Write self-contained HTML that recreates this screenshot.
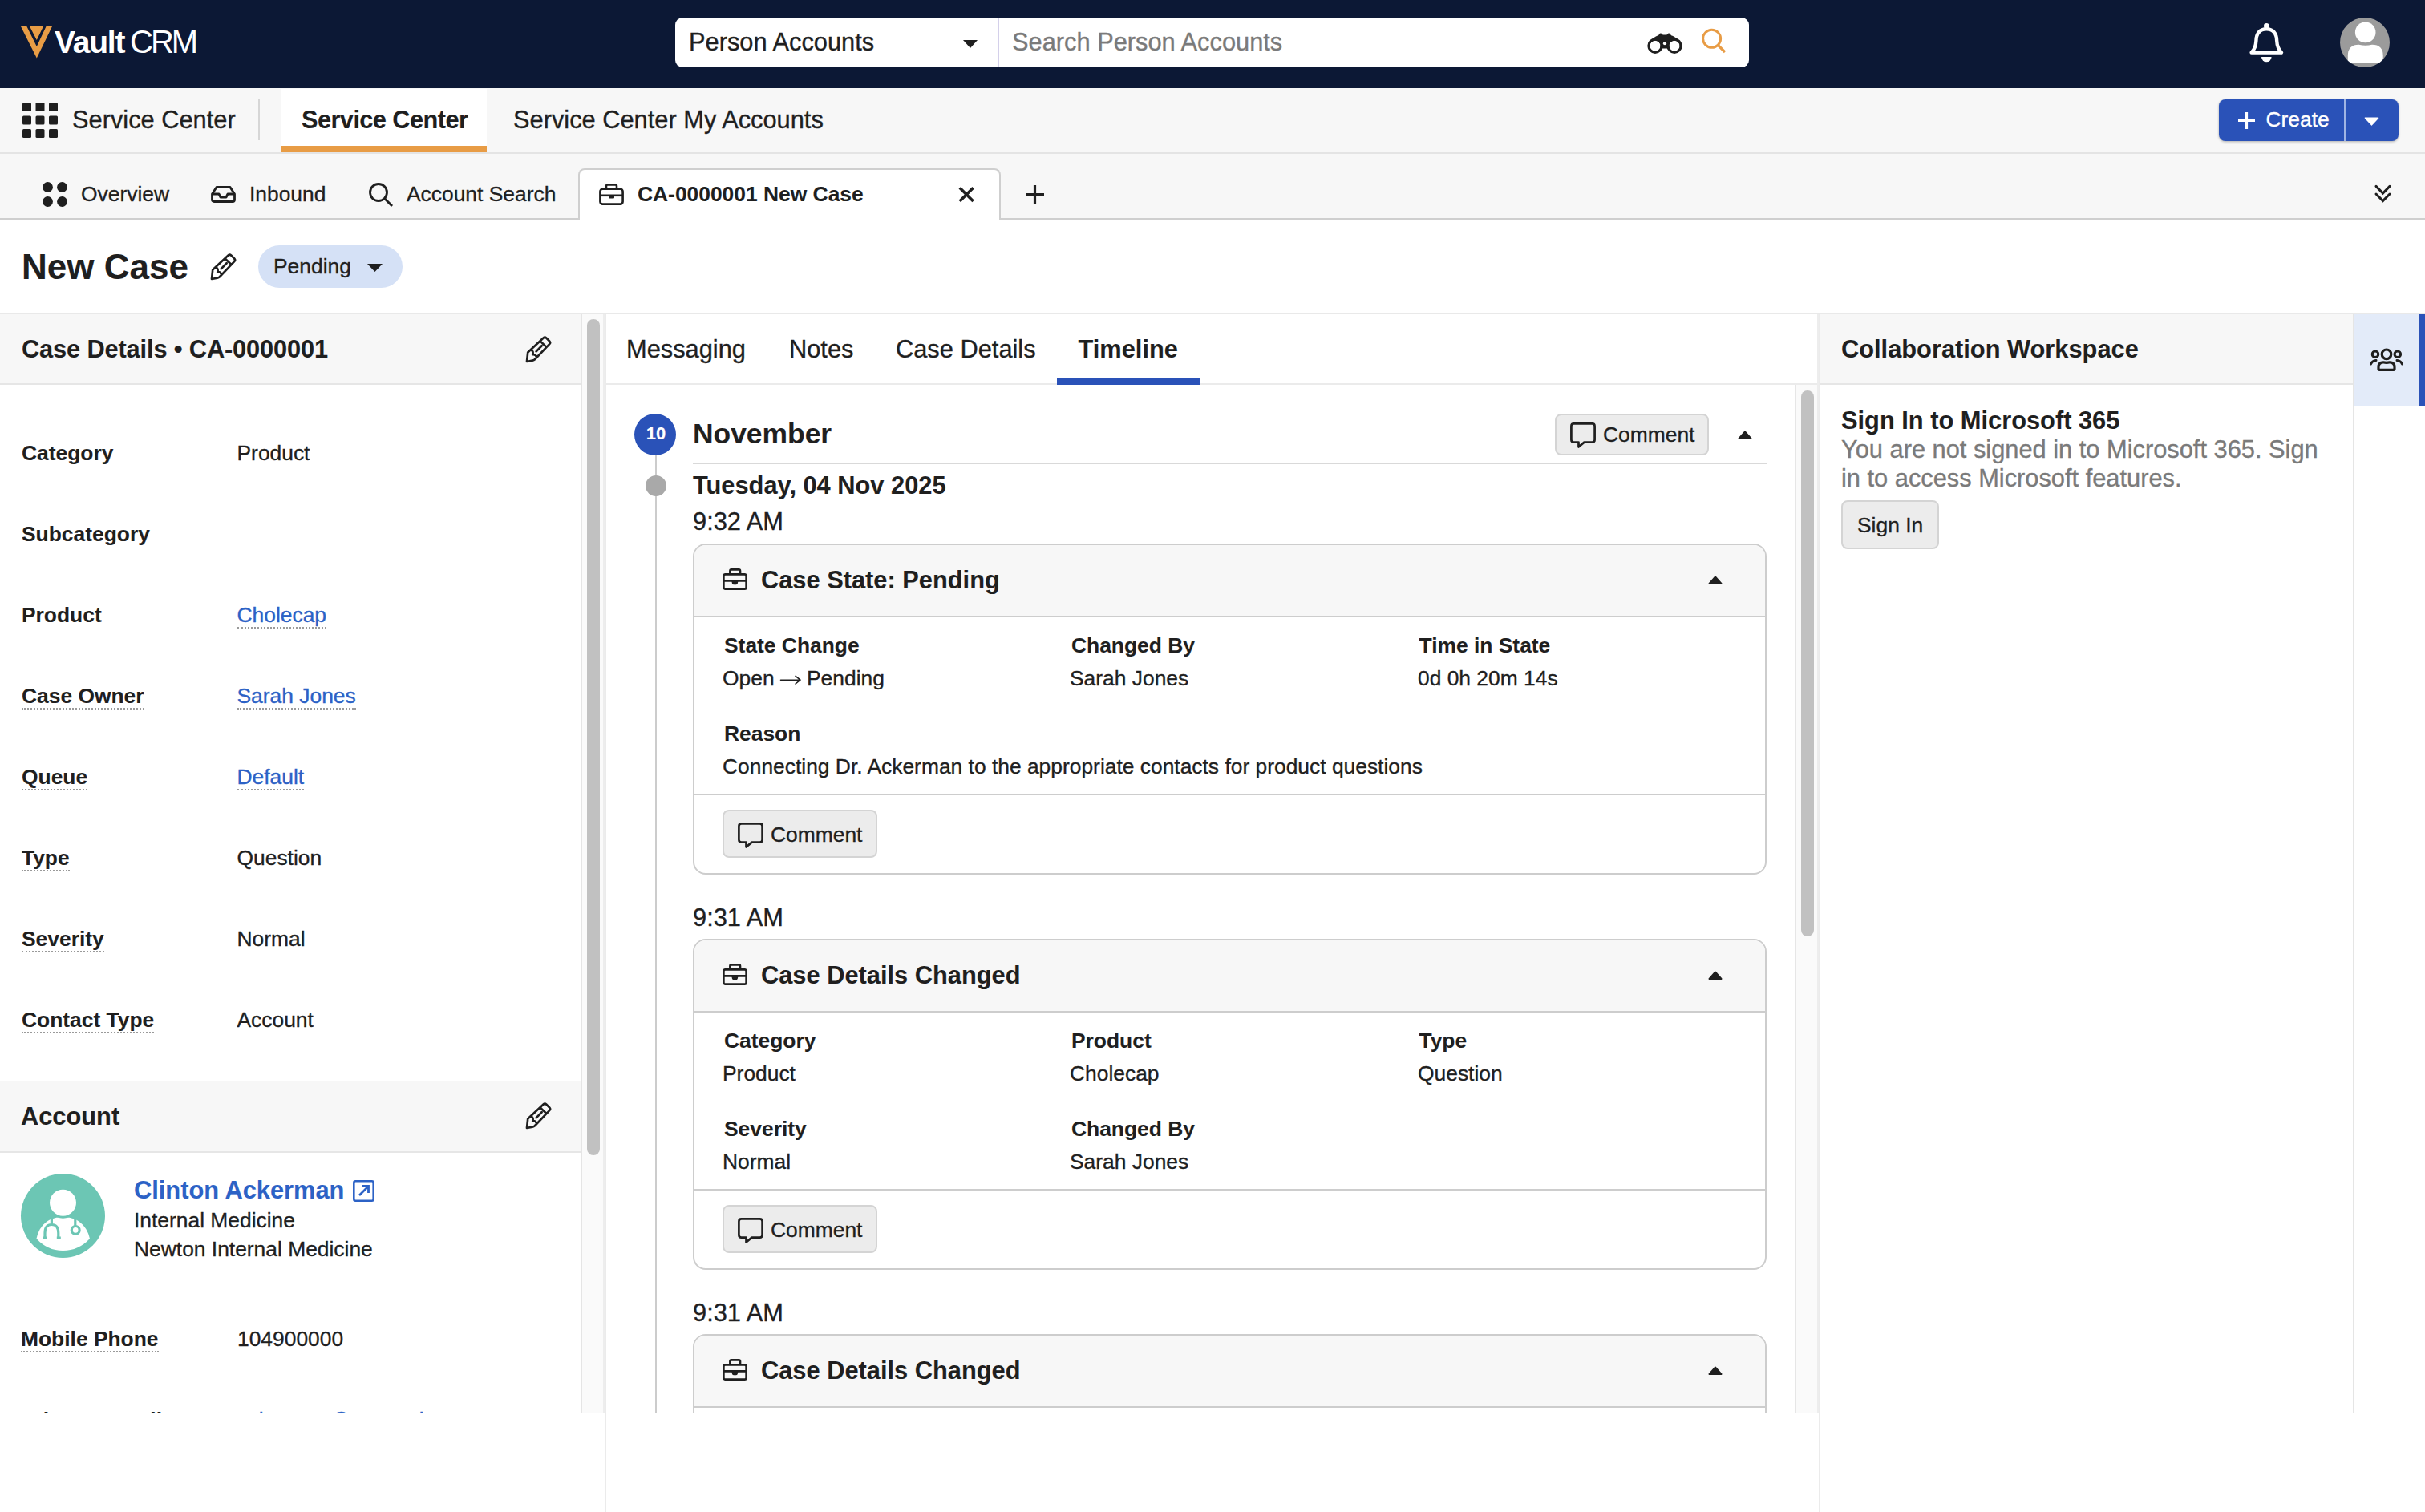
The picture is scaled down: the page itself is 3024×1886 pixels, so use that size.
<!DOCTYPE html>
<html><head><meta charset="utf-8">
<style>
*{box-sizing:border-box}
html,body{margin:0;padding:0}
body{width:3024px;height:1886px;position:relative;overflow:hidden;background:#fff;font-family:"Liberation Sans",sans-serif;color:#1f1f1f}
.a{position:absolute}
.t{position:absolute;white-space:nowrap;line-height:1;-webkit-text-stroke:0.35px currentColor}
.b{font-weight:bold;-webkit-text-stroke:0.1px currentColor}
.f26{font-size:26.4px}.f30{font-size:30.8px}.f32{font-size:32px}
.lnk{color:#2c62c6}
.dot{border-bottom:2px dotted #9a9a9a;padding-bottom:2px}
svg{position:absolute;overflow:visible}
@media (max-width:2000px){html{zoom:0.5}}
</style></head><body>
<svg width="0" height="0" style="position:absolute"><defs>
 <g id="pen"><path d="M2.2 19.6 L21.6 1.6 Q23.4 -0.1 25.2 1.6 L29.2 5.5 Q31 7.3 29.2 9.1 L10.9 28.2 Q9.8 29.2 8 29.6 L1 31 Z M17.6 5.4 L25.2 12.7 M12.6 18.4 L19.6 11.2 M6.6 16.6 Q9.6 18.4 8.2 22.2 Q11.8 21.6 13.2 25.2" fill="none" stroke="#1f1f1f" stroke-width="2.7" stroke-linejoin="round" stroke-linecap="round"/></g>

 <g id="brief"><path d="M9.4 7 V3.2 Q9.4 1.4 11.2 1.4 H20.2 Q22 1.4 22 3.2 V7" fill="none" stroke="#1f1f1f" stroke-width="2.7"/>
 <rect x="1.35" y="7.4" width="28.3" height="18.3" rx="2.2" fill="none" stroke="#1f1f1f" stroke-width="2.7"/>
 <line x1="1.4" y1="15.4" x2="29.6" y2="15.4" stroke="#1f1f1f" stroke-width="2.6"/>
 <path d="M11.2 15 H19.6 L18.9 18.6 Q18.6 20.2 17 20.2 H13.8 Q12.2 20.2 11.9 18.6 Z" fill="#1f1f1f"/></g>
 <g id="cmt"><path d="M4.5 1.4 H27.5 Q30.6 1.4 30.6 4.5 V21.5 Q30.6 24.6 27.5 24.6 H17.5 L10.5 30.5 V24.6 H4.5 Q1.4 24.6 1.4 21.5 V4.5 Q1.4 1.4 4.5 1.4 Z" fill="none" stroke="#1f1f1f" stroke-width="2.7" stroke-linejoin="round"/></g>
</defs></svg>


<!-- HEADER -->
<div class="a" style="left:0;top:0;width:3024px;height:110px;background:#0c1835"></div>
<svg style="left:26px;top:33px" width="40" height="40" viewBox="0 0 40 40">
 <polygon points="0,0 39,0 19.8,39.5" fill="#e89c45"/>
 <polygon points="7.4,0 11,0 19.8,17 28,0 31.5,0 19.8,25" fill="#0c1835"/>
</svg>
<div class="t b" style="left:68px;top:33px;font-size:39px;color:#fff;letter-spacing:-1.2px;-webkit-text-stroke:0">Vault</div>
<div class="t" style="left:162px;top:32px;font-size:40px;color:#fff;letter-spacing:-3px;-webkit-text-stroke:0">CRM</div>

<div class="a" style="left:842px;top:22px;width:1339px;height:62px;background:#fff;border-radius:9px"></div>
<div class="t f30" style="left:859px;top:38px">Person Accounts</div>
<svg style="left:1201px;top:50px" width="18" height="10" viewBox="0 0 18 10"><polygon points="0,0 18,0 9,10" fill="#1f1f1f"/></svg>
<div class="a" style="left:1244px;top:22px;width:2px;height:62px;background:#d4d0ea"></div>
<div class="t f30" style="left:1262px;top:38px;color:#7a7a7a">Search Person Accounts</div>
<!-- binoculars -->
<svg style="left:2054px;top:41px" width="44" height="26" viewBox="0 0 44 26">
 <path d="M2.5 13 C5 7.5 10 4.5 14 3.2 L15.8 0.8 Q16.8 0 18 0.8 L19.6 2.4 L24.4 2.4 L26 0.8 Q27.2 0 28.2 0.8 L30 3.2 C34 4.5 39 7.5 41.5 13 L41.5 17 L26 19.5 L18 19.5 L2.5 17 Z" fill="#1f1f1f"/>
 <circle cx="10" cy="16.2" r="6.5" fill="#fff"/>
 <circle cx="34" cy="16.2" r="6.5" fill="#fff"/>
 <circle cx="10" cy="16.2" r="8.1" fill="none" stroke="#1f1f1f" stroke-width="3.2"/>
 <circle cx="34" cy="16.2" r="8.1" fill="none" stroke="#1f1f1f" stroke-width="3.2"/>
 <circle cx="22" cy="13.2" r="2.1" fill="#fff"/>
</svg>
<!-- magnifier -->
<svg style="left:2120px;top:34px" width="36" height="36" viewBox="0 0 36 36">
 <circle cx="14.6" cy="14.3" r="11" fill="none" stroke="#e89c45" stroke-width="3"/>
 <line x1="22.5" y1="22.5" x2="31" y2="31" stroke="#e89c45" stroke-width="3.2"/>
</svg>
<!-- bell -->
<svg style="left:2804px;top:27px" width="46" height="52" viewBox="0 0 46 52">
 <circle cx="22.3" cy="5.4" r="3.3" fill="#fff"/>
 <path d="M3.6 38.6 Q9 33 9.4 24 C9.6 14.5 14.5 9.2 22.3 9.2 C30.1 9.2 35 14.5 35.2 24 Q35.6 33 41 38.6 Z" fill="none" stroke="#fff" stroke-width="4.4" stroke-linejoin="round"/>
 <path d="M16 44 H28.6 A6.3 6.3 0 0 1 16 44 Z" fill="#fff"/>
</svg>
<!-- avatar -->
<svg style="left:2918px;top:22px" width="62" height="62" viewBox="0 0 62 62">
 <defs><clipPath id="avc"><circle cx="31" cy="31" r="31"/></clipPath></defs>
 <circle cx="31" cy="31" r="31" fill="#9b9b9b"/>
 <circle cx="31.7" cy="18.4" r="12.8" fill="#fff"/>
 <path d="M9.8 56.2 V47.5 Q9.8 33.7 23.5 33.7 Q31.7 35.6 40 33.7 Q53.7 33.7 53.7 47.5 V56.2 Z" fill="#fff" clip-path="url(#avc)"/>
</svg>

<!-- APP NAV -->
<div class="a" style="left:0;top:110px;width:3024px;height:82px;background:#f7f7f7;border-bottom:2px solid #e4e4e4"></div>
<svg style="left:28px;top:128px" width="44" height="44" viewBox="0 0 44 44" fill="#1f1f1f">
 <rect x="0" y="0" width="11" height="11" rx="1.5"/><rect x="16.5" y="0" width="11" height="11" rx="1.5"/><rect x="33" y="0" width="11" height="11" rx="1.5"/>
 <rect x="0" y="16.5" width="11" height="11" rx="1.5"/><rect x="16.5" y="16.5" width="11" height="11" rx="1.5"/><rect x="33" y="16.5" width="11" height="11" rx="1.5"/>
 <rect x="0" y="33" width="11" height="11" rx="1.5"/><rect x="16.5" y="33" width="11" height="11" rx="1.5"/><rect x="33" y="33" width="11" height="11" rx="1.5"/>
</svg>
<div class="t f30" style="left:90px;top:135px">Service Center</div>
<div class="a" style="left:322px;top:124px;width:2px;height:51px;background:#d6d6d6"></div>
<div class="a" style="left:350px;top:111px;width:257px;height:79px;background:#fff;border-bottom:8px solid #e89c45"></div>
<div class="t f30 b" style="left:376px;top:135px;letter-spacing:-0.6px">Service Center</div>
<div class="t f30" style="left:640px;top:135px">Service Center My Accounts</div>
<!-- create -->
<div class="a" style="left:2767px;top:124px;width:224px;height:52px;background:#2a52b8;border-radius:8px;box-shadow:0 1px 3px rgba(0,0,0,.3)"></div>
<div class="a" style="left:2923px;top:124px;width:2px;height:52px;background:#9fb4e4"></div>
<svg style="left:2790px;top:139px" width="23" height="23" viewBox="0 0 23 23"><path d="M11.5 1 V22 M1 11.5 H22" stroke="#fff" stroke-width="3.2"/></svg>
<div class="t f26" style="left:2825.5px;top:136px;color:#fff">Create</div>
<svg style="left:2948px;top:146px" width="19" height="11" viewBox="0 0 19 11"><path d="M1.5 1.2 H17.5 L9.5 9.8 Z" fill="#fff" stroke="#fff" stroke-width="1.6" stroke-linejoin="round"/></svg>

<!-- TABS ROW -->
<div class="a" style="left:0;top:192px;width:3024px;height:82px;background:#f7f7f7;border-bottom:2px solid #cfcfcf"></div>
<svg style="left:53px;top:227px" width="31" height="31" viewBox="0 0 31 31" fill="#1f1f1f">
 <circle cx="6.5" cy="6.5" r="6.4"/><circle cx="24.5" cy="6.5" r="6.4"/><circle cx="6.5" cy="24.5" r="6.4"/><circle cx="24.5" cy="24.5" r="6.4"/>
</svg>
<div class="t f26" style="left:101px;top:229px">Overview</div>
<svg style="left:263px;top:232px" width="31" height="21" viewBox="0 0 31 21">
 <path d="M1.5 10 L7 1.5 H24 L29.5 10 V17 Q29.5 19.5 27 19.5 H4 Q1.5 19.5 1.5 17 Z M1.5 10 H10 L12 14 H19 L21 10 H29.5" fill="none" stroke="#1f1f1f" stroke-width="2.8" stroke-linejoin="round"/>
</svg>
<div class="t f26" style="left:311px;top:229px">Inbound</div>
<svg style="left:459px;top:227px" width="32" height="32" viewBox="0 0 32 32">
 <circle cx="13" cy="13" r="10.5" fill="none" stroke="#1f1f1f" stroke-width="2.8"/>
 <line x1="20.5" y1="20.5" x2="30" y2="30" stroke="#1f1f1f" stroke-width="3"/>
</svg>
<div class="t f26" style="left:507px;top:229px">Account Search</div>
<div class="a" style="left:721px;top:210px;width:527px;height:64px;background:#fff;border:2px solid #cfcfcf;border-bottom:none;border-radius:8px 8px 0 0"></div>
<svg style="left:747px;top:229px" width="31" height="27" viewBox="0 0 31 27">
 <path d="M9 6.5 V3 Q9 1.4 10.6 1.4 H20.4 Q22 1.4 22 3 V6.5" fill="none" stroke="#1f1f1f" stroke-width="2.6"/>
 <rect x="1.4" y="6.7" width="28.2" height="18.9" rx="3" fill="none" stroke="#1f1f1f" stroke-width="2.6"/>
 <line x1="1.4" y1="14.8" x2="29.6" y2="14.8" stroke="#1f1f1f" stroke-width="2.6"/>
 <rect x="12" y="14.5" width="7" height="4" rx="1" fill="#1f1f1f"/>
</svg>
<div class="t f26 b" style="left:795px;top:229px">CA-0000001 New Case</div>
<svg style="left:1195px;top:233px" width="20" height="19" viewBox="0 0 20 19"><path d="M1.8 1.2 L18.6 18 M18.6 1.2 L1.8 18" stroke="#1f1f1f" stroke-width="3.6"/></svg>
<svg style="left:1279px;top:231px" width="23" height="23" viewBox="0 0 23 23"><path d="M11.5 0 V23 M0 11.5 H23" stroke="#1f1f1f" stroke-width="3.2"/></svg>
<svg style="left:2961px;top:230px" width="21" height="23" viewBox="0 0 21 23"><path d="M2 2.4 L10.5 11 L19 2.4 M2 12 L10.5 20.6 L19 12" fill="none" stroke="#1f1f1f" stroke-width="3" stroke-linecap="round"/></svg>

<!-- PAGE TITLE -->
<div class="t b" style="left:27px;top:311px;font-size:44px">New Case</div>
<svg style="left:263px;top:317px" width="31" height="31" viewBox="0 0 31 31"><use href="#pen"/></svg>
<div class="a" style="left:322px;top:306px;width:180px;height:53px;background:#d5e1f6;border-radius:27px"></div>
<div class="t f26" style="left:341px;top:319px">Pending</div>
<svg style="left:458px;top:329px" width="19" height="10" viewBox="0 0 19 10"><polygon points="0,0 19,0 9.5,10" fill="#1f1f1f"/></svg>

<!-- PANELS top border -->
<div class="a" style="left:0;top:390px;width:3024px;height:2px;background:#e9e9e9"></div>


<!-- LEFT PANEL -->
<div class="a" style="left:0;top:392px;width:724px;height:1371px;overflow:hidden;background:#fff">
 <div class="a" style="left:0;top:0;width:724px;height:88px;background:#f7f7f7;border-bottom:2px solid #e6e6e6"></div>
 <div class="t f30 b" style="left:27px;top:29px;letter-spacing:-0.15px">Case Details &bull; CA-0000001</div>
 <svg style="left:656px;top:28px" width="31" height="31" viewBox="0 0 31 31"><use href="#pen"/></svg>
 <div class="t f26 b" style="left:27px;top:160px">Category</div><div class="t f26" style="left:295.5px;top:160px">Product</div>
 <div class="t f26 b" style="left:27px;top:261px">Subcategory</div>
 <div class="t f26 b" style="left:27px;top:362px">Product</div><div class="t f26 lnk dot" style="left:295.5px;top:362px">Cholecap</div>
 <div class="t f26 b dot" style="left:27px;top:463px">Case Owner</div><div class="t f26 lnk dot" style="left:295.5px;top:463px">Sarah Jones</div>
 <div class="t f26 b dot" style="left:27px;top:564px">Queue</div><div class="t f26 lnk dot" style="left:295.5px;top:564px">Default</div>
 <div class="t f26 b dot" style="left:27px;top:665px">Type</div><div class="t f26" style="left:295.5px;top:665px">Question</div>
 <div class="t f26 b dot" style="left:27px;top:766px">Severity</div><div class="t f26" style="left:295.5px;top:766px">Normal</div>
 <div class="t f26 b dot" style="left:27px;top:867px">Contact Type</div><div class="t f26" style="left:295.5px;top:867px">Account</div>
 <div class="a" style="left:0;top:957px;width:724px;height:89px;background:#f7f7f7;border-bottom:2px solid #e6e6e6"></div>
 <div class="t f30 b" style="left:26px;top:986px">Account</div>
 <svg style="left:656px;top:984px" width="31" height="31" viewBox="0 0 31 31"><use href="#pen"/></svg>
 <div class="a" style="left:26px;top:1072px;width:105px;height:105px;border-radius:50%;background:#6cc6b4"></div>
 <svg style="left:26px;top:1072px" width="105" height="105" viewBox="0 0 105 105">
  <path d="M36.9 57 Q44 54 52.5 54 Q61 54 68.2 57 Q82 64 86 81 Q72 96 52.5 96 Q33 96 19.5 81 Q23 64 36.9 57 Z" fill="#fff"/>
  <circle cx="52.5" cy="36.2" r="19.6" fill="#6cc6b4"/>
  <circle cx="52.5" cy="36.2" r="16.5" fill="#fff"/>
  <path d="M38.4 54 V63.5 M30 80 V74 Q30 63.5 38.4 63.5 Q46.8 63.5 46.8 74 V80 M27 80 H32 M44.8 80 H49.8" fill="none" stroke="#6cc6b4" stroke-width="3.2"/>
  <path d="M67.8 55 V65.5" stroke="#6cc6b4" stroke-width="3.2"/>
  <circle cx="68.2" cy="70.4" r="4.9" fill="none" stroke="#6cc6b4" stroke-width="3.2"/>
 </svg>
 <div class="t f30 b lnk" style="left:167px;top:1078px">Clinton Ackerman</div>
 <svg style="left:440px;top:1080px" width="27" height="27" viewBox="0 0 27 27">
  <rect x="1.3" y="1.3" width="24.4" height="24.4" rx="2" fill="none" stroke="#2c62c6" stroke-width="2.6"/>
  <path d="M8 19 L19 8 M11 7.5 H19.5 V16" fill="none" stroke="#2c62c6" stroke-width="2.8"/>
 </svg>
 <div class="t f26" style="left:167px;top:1117px">Internal Medicine</div>
 <div class="t f26" style="left:167px;top:1153px">Newton Internal Medicine</div>
 <div class="t f26 b dot" style="left:26px;top:1265px">Mobile Phone</div><div class="t f26" style="left:296px;top:1265px">104900000</div>
 <div class="t f26 b" style="left:26px;top:1366px">Primary Email</div><div class="t f26 lnk" style="left:295px;top:1366px">ackerman@newtonim.com</div>
</div>
<div class="a" style="left:724px;top:392px;width:28px;height:1371px;background:#fafafa;border-left:2px solid #e5e5e5"></div>
<div class="a" style="left:732px;top:398px;width:16px;height:1043px;background:#c1c1c1;border-radius:8px"></div>
<div class="a" style="left:752px;top:392px;width:2px;height:1371px;background:#ededed"></div>
<div class="a" style="left:754px;top:392px;width:2px;height:1494px;background:#ebebeb"></div>


<!-- MIDDLE PANEL -->
<div class="a" style="left:756px;top:392px;width:1510px;height:1371px;overflow:hidden;background:#fff">
 <div class="a" style="left:0;top:86px;width:1510px;height:2px;background:#ebebeb"></div>
 <div class="t f30" style="left:25px;top:29px">Messaging</div>
 <div class="t f30" style="left:228px;top:29px">Notes</div>
 <div class="t f30" style="left:361px;top:29px">Case Details</div>
 <div class="t f30 b" style="left:588.5px;top:29px">Timeline</div>
 <div class="a" style="left:562px;top:80px;width:178px;height:8px;background:#2a52b8"></div>
</div>
<div class="a" style="left:756px;top:480px;width:1482px;height:1283px;overflow:hidden;background:#fff">
 <div class="a" style="left:61px;top:76px;width:2px;height:1300px;background:#cccccc"></div>
 <div class="a" style="left:35px;top:36px;width:52px;height:52px;border-radius:50%;background:#2a52b8"></div>
 <div class="t b" style="left:36px;top:50px;width:52px;text-align:center;font-size:22px;color:#fff">10</div>
 <div class="t b" style="left:108px;top:44px;font-size:35.4px">November</div>
 <div class="a" style="left:108px;top:97px;width:1339px;height:2px;background:#d9d9d9"></div>
 <div class="a" style="left:1183px;top:36px;width:192px;height:52px;background:#ececec;border:2px solid #d4d4d4;border-radius:8px"></div>
 <svg style="left:1202px;top:47px" width="32" height="32" viewBox="0 0 32 32"><use href="#cmt"/></svg>
 <div class="t f26" style="left:1243px;top:49px">Comment</div>
 <svg style="left:1411px;top:57px" width="18" height="11" viewBox="0 0 18 11"><path d="M1.5 10 L9 1.5 L16.5 10 Z" fill="#1f1f1f" stroke="#1f1f1f" stroke-width="2" stroke-linejoin="round"/></svg>
 <div class="a" style="left:49px;top:113px;width:26px;height:26px;border-radius:50%;background:#a9a9a9"></div>
 <div class="t f30 b" style="left:108px;top:111px">Tuesday, 04 Nov 2025</div>
 <div class="t f30" style="left:108px;top:156px">9:32 AM</div>
 <div style="position:absolute;left:0;top:-480px">
 
 <div class="a" style="left:108px;top:678px;width:1339px;height:413px;border:2px solid #cdcdcd;border-radius:16px;background:#fff;overflow:hidden">
  <div class="a" style="left:0;top:0;width:1335px;height:90px;background:#f7f7f7;border-bottom:2px solid #cdcdcd"></div>
  <svg style="left:35px;top:29px" width="31" height="27" viewBox="0 0 31 27"><use href="#brief"/></svg>
  <div class="t f30 b" style="left:83px;top:29px">Case State: Pending</div>
  <svg style="left:1264px;top:38px" width="18" height="11" viewBox="0 0 18 11"><path d="M1.5 10 L9 1.5 L16.5 10 Z" fill="#1f1f1f" stroke="#1f1f1f" stroke-width="2" stroke-linejoin="round"/></svg>
  <div class="t f26 b" style="left:37px;top:112px">State Change</div><div class="t f26" style="left:35px;top:153px">Open</div><svg style="left:106px;top:162px" width="28" height="12" viewBox="0 0 28 12"><path d="M1.5 6.2 H25.5 M20 1.4 L26 6.2 L20 11" fill="none" stroke="#1f1f1f" stroke-width="1.6" stroke-linecap="round" stroke-linejoin="round"/></svg><div class="t f26" style="left:140px;top:153px">Pending</div><div class="t f26 b" style="left:470px;top:112px">Changed By</div><div class="t f26" style="left:468px;top:153px">Sarah Jones</div><div class="t f26 b" style="left:903.5px;top:112px">Time in State</div><div class="t f26" style="left:902px;top:153px">0d 0h 20m 14s</div><div class="t f26 b" style="left:37px;top:222px">Reason</div><div class="t f26" style="left:35px;top:263px">Connecting Dr. Ackerman to the appropriate contacts for product questions</div>
  <div class="a" style="left:0;top:310px;width:1335px;height:2px;background:#cdcdcd"></div>
  <div class="a" style="left:35px;top:330px;width:193px;height:60px;background:#ececec;border:2px solid #d4d4d4;border-radius:8px"></div>
  <svg style="left:54px;top:346px" width="32" height="32" viewBox="0 0 32 32"><use href="#cmt"/></svg>
  <div class="t f26" style="left:95px;top:348px">Comment</div>
 </div>
 </div>
 <div class="t f30" style="left:108px;top:650px">9:31 AM</div>
 <div style="position:absolute;left:0;top:-480px">
 
 <div class="a" style="left:108px;top:1171px;width:1339px;height:413px;border:2px solid #cdcdcd;border-radius:16px;background:#fff;overflow:hidden">
  <div class="a" style="left:0;top:0;width:1335px;height:90px;background:#f7f7f7;border-bottom:2px solid #cdcdcd"></div>
  <svg style="left:35px;top:29px" width="31" height="27" viewBox="0 0 31 27"><use href="#brief"/></svg>
  <div class="t f30 b" style="left:83px;top:29px">Case Details Changed</div>
  <svg style="left:1264px;top:38px" width="18" height="11" viewBox="0 0 18 11"><path d="M1.5 10 L9 1.5 L16.5 10 Z" fill="#1f1f1f" stroke="#1f1f1f" stroke-width="2" stroke-linejoin="round"/></svg>
  <div class="t f26 b" style="left:37px;top:112px">Category</div><div class="t f26" style="left:35px;top:153px">Product</div><div class="t f26 b" style="left:470px;top:112px">Product</div><div class="t f26" style="left:468px;top:153px">Cholecap</div><div class="t f26 b" style="left:903.5px;top:112px">Type</div><div class="t f26" style="left:902px;top:153px">Question</div><div class="t f26 b" style="left:37px;top:222px">Severity</div><div class="t f26" style="left:35px;top:263px">Normal</div><div class="t f26 b" style="left:470px;top:222px">Changed By</div><div class="t f26" style="left:468px;top:263px">Sarah Jones</div>
  <div class="a" style="left:0;top:310px;width:1335px;height:2px;background:#cdcdcd"></div>
  <div class="a" style="left:35px;top:330px;width:193px;height:60px;background:#ececec;border:2px solid #d4d4d4;border-radius:8px"></div>
  <svg style="left:54px;top:346px" width="32" height="32" viewBox="0 0 32 32"><use href="#cmt"/></svg>
  <div class="t f26" style="left:95px;top:348px">Comment</div>
 </div>
 </div>
 <div class="t f30" style="left:108px;top:1143px">9:31 AM</div>
 <div style="position:absolute;left:0;top:-480px">
 
 <div class="a" style="left:108px;top:1664px;width:1339px;height:413px;border:2px solid #cdcdcd;border-radius:16px;background:#fff;overflow:hidden">
  <div class="a" style="left:0;top:0;width:1335px;height:90px;background:#f7f7f7;border-bottom:2px solid #cdcdcd"></div>
  <svg style="left:35px;top:29px" width="31" height="27" viewBox="0 0 31 27"><use href="#brief"/></svg>
  <div class="t f30 b" style="left:83px;top:29px">Case Details Changed</div>
  <svg style="left:1264px;top:38px" width="18" height="11" viewBox="0 0 18 11"><path d="M1.5 10 L9 1.5 L16.5 10 Z" fill="#1f1f1f" stroke="#1f1f1f" stroke-width="2" stroke-linejoin="round"/></svg>
  <div class="t f26 b" style="left:37px;top:112px">Category</div><div class="t f26" style="left:35px;top:153px">Product</div><div class="t f26 b" style="left:470px;top:112px">Product</div><div class="t f26" style="left:468px;top:153px">Cholecap</div><div class="t f26 b" style="left:903.5px;top:112px">Type</div><div class="t f26" style="left:902px;top:153px">Question</div><div class="t f26 b" style="left:37px;top:222px">Severity</div><div class="t f26" style="left:35px;top:263px">Normal</div><div class="t f26 b" style="left:470px;top:222px">Changed By</div><div class="t f26" style="left:468px;top:263px">Sarah Jones</div>
  <div class="a" style="left:0;top:310px;width:1335px;height:2px;background:#cdcdcd"></div>
  <div class="a" style="left:35px;top:330px;width:193px;height:60px;background:#ececec;border:2px solid #d4d4d4;border-radius:8px"></div>
  <svg style="left:54px;top:346px" width="32" height="32" viewBox="0 0 32 32"><use href="#cmt"/></svg>
  <div class="t f26" style="left:95px;top:348px">Comment</div>
 </div>
 </div>
</div>
<div class="a" style="left:2238px;top:480px;width:28px;height:1283px;background:#fafafa;border-left:2px solid #e6e6e6"></div>
<div class="a" style="left:2246px;top:487px;width:16px;height:681px;background:#c1c1c1;border-radius:8px"></div>
<div class="a" style="left:2266px;top:392px;width:2px;height:1371px;background:#ededed"></div>
<div class="a" style="left:2268px;top:392px;width:2px;height:1494px;background:#ebebeb"></div>

<!-- RIGHT PANEL -->
<div class="a" style="left:2270px;top:392px;width:664px;height:88px;background:#f7f7f7;border-bottom:2px solid #e6e6e6"></div>
<div class="t f30 b" style="left:2296px;top:421px">Collaboration Workspace</div>
<div class="t f30 b" style="left:2296px;top:510px">Sign In to Microsoft 365</div>
<div class="t f30" style="left:2296px;top:546px;color:#7a7a7a">You are not signed in to Microsoft 365. Sign</div>
<div class="t f30" style="left:2296px;top:582px;color:#7a7a7a">in to access Microsoft features.</div>
<div class="a" style="left:2296px;top:624px;width:122px;height:61px;background:#ececec;border:2px solid #d4d4d4;border-radius:8px"></div>
<div class="t f26" style="left:2316px;top:642px">Sign In</div>
<div class="a" style="left:2934px;top:392px;width:2px;height:1371px;background:#e5e5e5"></div>
<div class="a" style="left:2936px;top:392px;width:88px;height:114px;background:#e3ebf9"></div>
<div class="a" style="left:3016px;top:392px;width:8px;height:114px;background:#2a52b8"></div>
<svg style="left:2955px;top:434px" width="42" height="32" viewBox="0 0 42 32">
 <circle cx="21" cy="7.8" r="5.8" fill="none" stroke="#1f1f1f" stroke-width="3.2"/>
 <circle cx="7" cy="7.8" r="3.8" fill="none" stroke="#1f1f1f" stroke-width="3"/>
 <circle cx="34.8" cy="7.8" r="3.8" fill="none" stroke="#1f1f1f" stroke-width="3"/>
 <path d="M11 26.6 V24 Q11 17.8 17 17.8 Q21 18.8 25 17.8 Q31 17.8 31 24 V26.6 Q31 27.4 30.2 27.4 H11.8 Q11 27.4 11 26.6 Z" fill="none" stroke="#1f1f1f" stroke-width="3.2" stroke-linejoin="round"/>
 <path d="M1.5 20 Q3 16 8 15.5 M40.5 20 Q39 16 34 15.5" fill="none" stroke="#1f1f1f" stroke-width="3" stroke-linecap="round"/>
</svg>

</body></html>
